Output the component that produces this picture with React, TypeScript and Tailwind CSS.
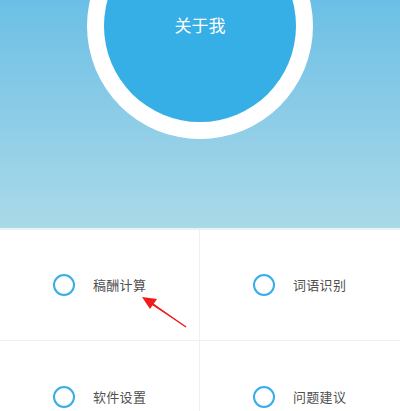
import React from "react";

const items = ["稿酬计算", "词语识别", "软件设置", "问题建议"];

export default function App() {
  return (
    <div
      className="relative w-[400px] h-[411px] overflow-hidden bg-white"
      style={{ fontFamily: '"Noto Sans CJK SC", "Noto Sans", sans-serif' }}
    >
      <div className="h-[228px] overflow-hidden flex justify-center bg-gradient-to-b from-[#6bbfe6] to-[#aad9e8]">
        <div className="mt-[-87px] w-[226px] h-[226px] shrink-0 rounded-full bg-white flex items-center justify-center">
          <div className="w-[192px] h-[192px] rounded-full bg-[#35afe5] flex items-center justify-center">
            <span className="text-white text-[17px] -mt-[2px]">关于我</span>
          </div>
        </div>
      </div>
      <div className="h-[2px] bg-[#e6f4f8]" />
      <div className="grid grid-cols-2">
        {items.map((t, i) => (
          <div
            key={t}
            className={`h-[111px] flex items-center pl-[53px] gap-[18px] border-[#f0f0f0] ${
              i % 2 === 0 ? "border-r" : ""
            } ${i < 2 ? "border-b" : ""}`}
          >
            <div className="w-[22px] h-[22px] rounded-full border-[2.5px] border-[#35aee6]" />
            <span className="text-[13px] text-[#505050] tracking-[0.3px]">{t}</span>
          </div>
        ))}
      </div>
      <svg className="absolute left-0 top-0" width="400" height="411">
        <polygon points="186,327 150,301 152,305" fill="#f01c1c" />
        <line x1="186" y1="327" x2="151" y2="303" stroke="#f01c1c" strokeWidth="1.5" />
        <polygon points="142,297 157,299 150,309" fill="#f01c1c" />
      </svg>
    </div>
  );
}
